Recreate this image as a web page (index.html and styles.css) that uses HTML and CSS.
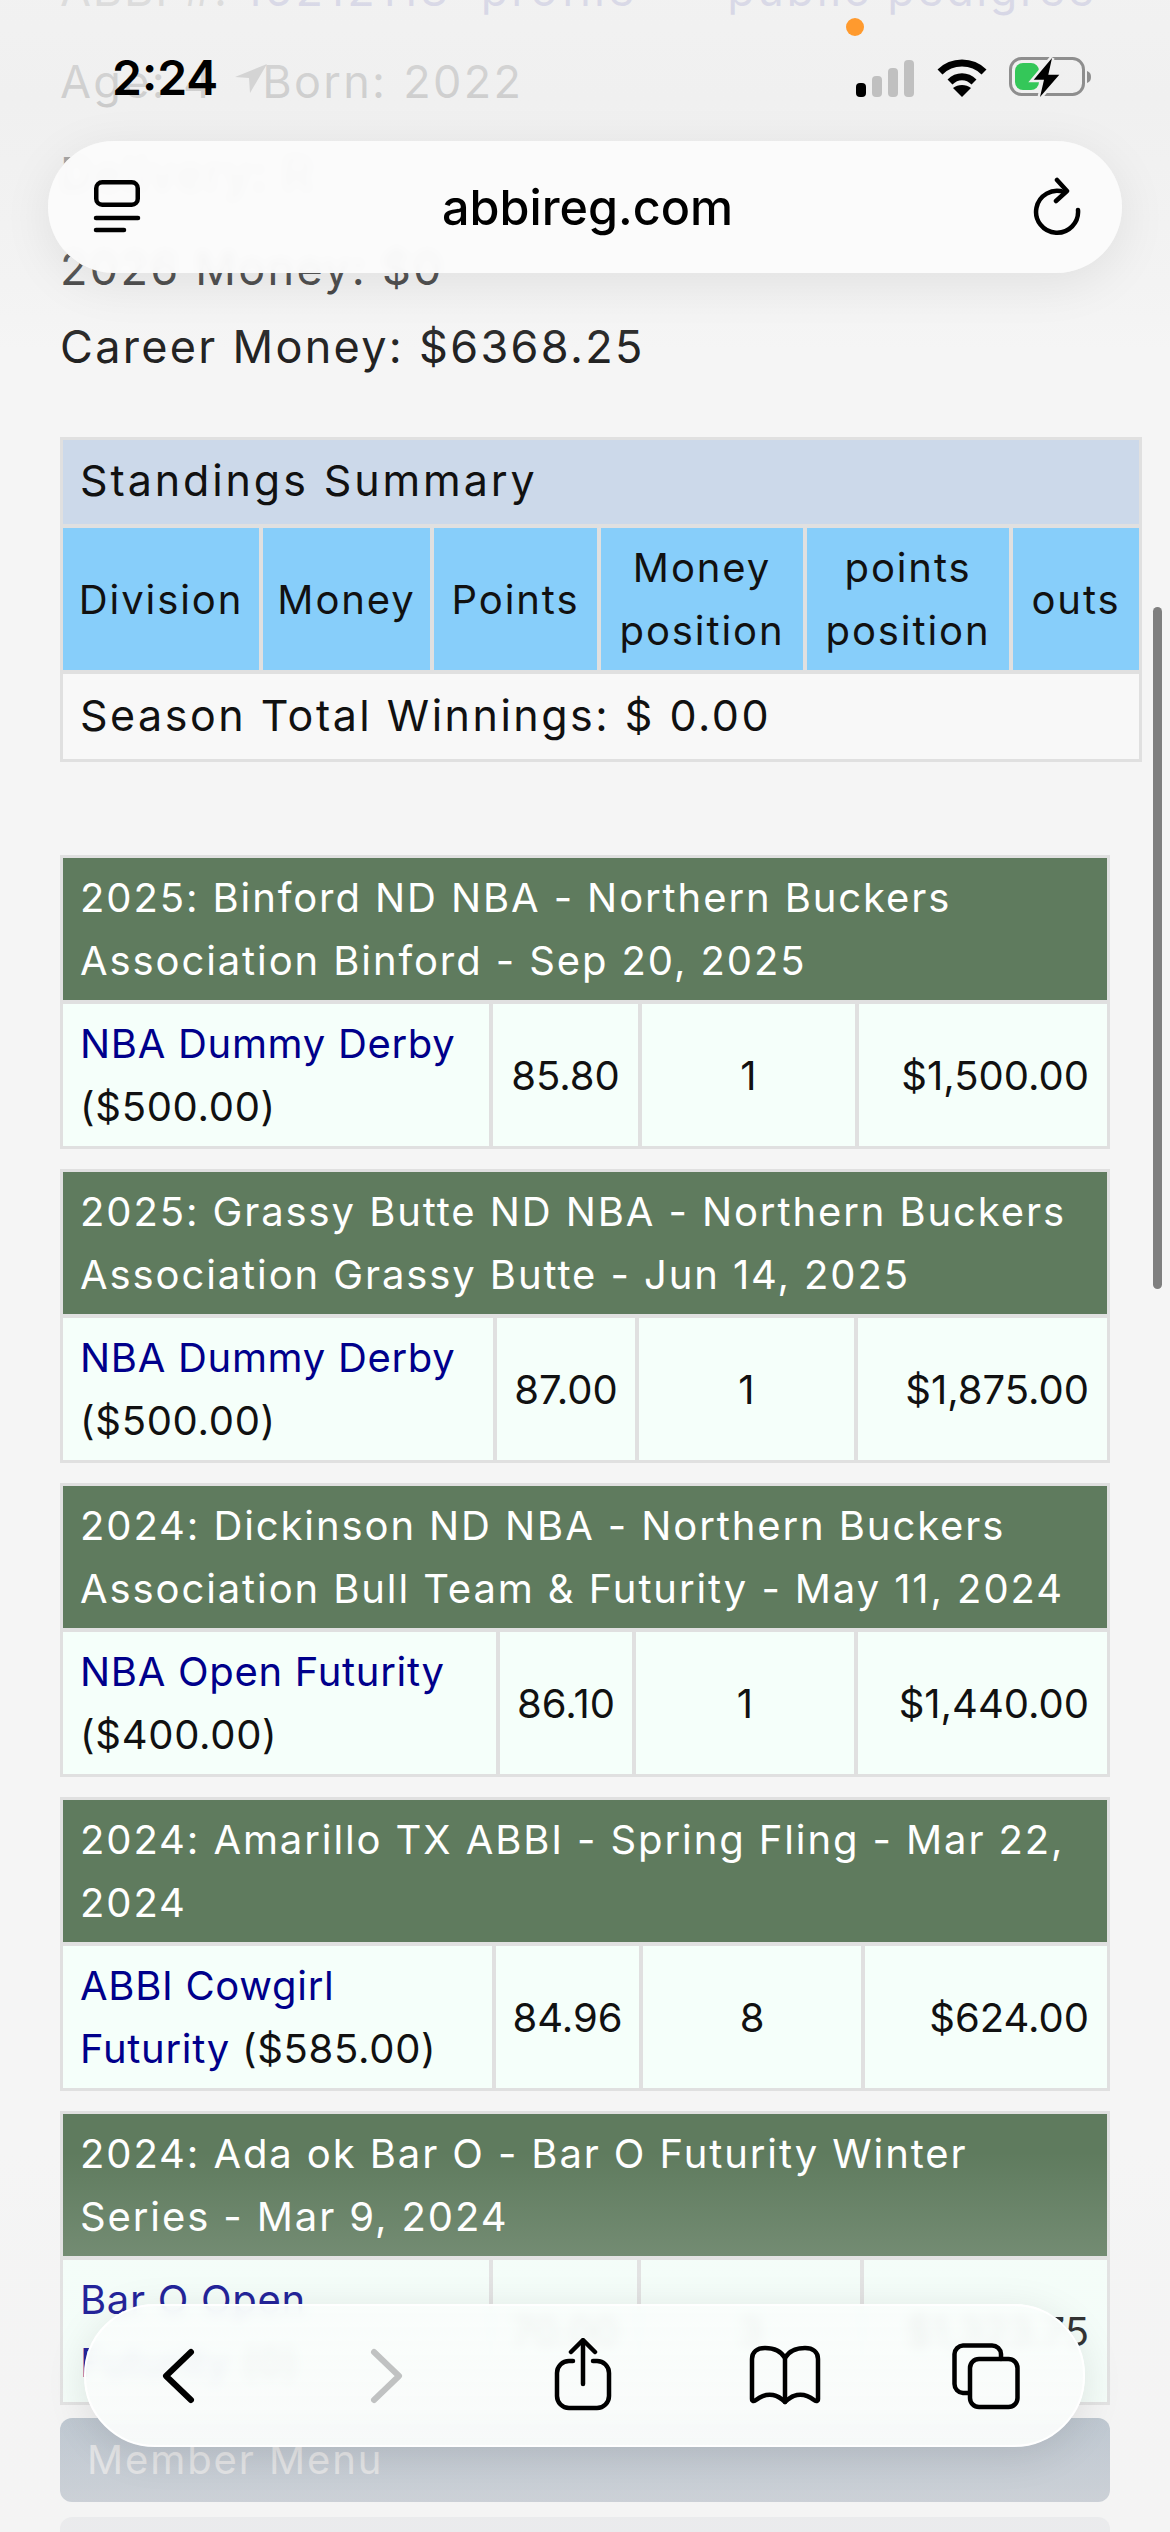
FILE: index.html
```html
<!DOCTYPE html>
<html lang="en">
<head>
    <meta charset="UTF-8">
    <meta name="viewport" content="width=device-width, initial-scale=1.0">
    <title>abbireg.com</title>
    <link rel="stylesheet" href="styles.css">
</head>
<body>
    <div class="page">
        <div class="info-block">
            <p class="info info-top">ABBI #: <a class="id-link" href="#">16212118 profile</a><span class="info-gap"></span><a href="#">public pedigree</a></p>
            <p class="info info-age">Age: 4 &nbsp; Born: 2022</p>
            <p class="info">Delivery: R</p>
        </div>
        <div class="money-block">
            <p class="info">2026 Money: $0</p>
            <p class="info">Career Money: $6368.25</p>
        </div>

        <table class="standings">
            <colgroup><col><col><col><col><col><col></colgroup>
            <tr><td class="caption" colspan="6">Standings Summary</td></tr>
            <tr class="heads">
                <th>Division</th>
                <th>Money</th>
                <th>Points</th>
                <th>Money position</th>
                <th>points position</th>
                <th>outs</th>
            </tr>
            <tr><td class="total" colspan="6">Season Total Winnings: $ 0.00</td></tr>
        </table>

        <table class="event event-a">
            <colgroup><col><col><col><col></colgroup>
            <tr><th class="event-title" colspan="4">2025: Binford ND NBA - Northern Buckers Association Binford - Sep 20, 2025</th></tr>
            <tr>
                <td><a href="#">NBA Dummy Derby</a> ($500.00)</td>
                <td class="mid">85.80</td>
                <td class="mid">1</td>
                <td class="amount">$1,500.00</td>
            </tr>
        </table>
        <table class="event event-b">
            <colgroup><col><col><col><col></colgroup>
            <tr><th class="event-title" colspan="4">2025: Grassy Butte ND NBA - Northern Buckers Association Grassy Butte - Jun 14, 2025</th></tr>
            <tr>
                <td><a href="#">NBA Dummy Derby</a> ($500.00)</td>
                <td class="mid">87.00</td>
                <td class="mid">1</td>
                <td class="amount">$1,875.00</td>
            </tr>
        </table>
        <table class="event event-c">
            <colgroup><col><col><col><col></colgroup>
            <tr><th class="event-title" colspan="4">2024: Dickinson ND NBA - Northern Buckers Association Bull Team &amp; Futurity - May 11, 2024</th></tr>
            <tr>
                <td><a href="#">NBA Open Futurity</a> ($400.00)</td>
                <td class="mid">86.10</td>
                <td class="mid">1</td>
                <td class="amount">$1,440.00</td>
            </tr>
        </table>
        <table class="event event-d">
            <colgroup><col><col><col><col></colgroup>
            <tr><th class="event-title" colspan="4">2024: Amarillo TX ABBI - Spring Fling - Mar 22, 2024</th></tr>
            <tr>
                <td><a href="#">ABBI Cowgirl<br>Futurity</a> ($585.00)</td>
                <td class="mid">84.96</td>
                <td class="mid">8</td>
                <td class="amount">$624.00</td>
            </tr>
        </table>
        <table class="event event-e">
            <colgroup><col><col><col><col></colgroup>
            <tr><th class="event-title" colspan="4">2024: Ada ok Bar O - Bar O Futurity Winter Series - Mar 9, 2024</th></tr>
            <tr>
                <td><a href="#">Bar O Open<br>Futurity</a> (0)</td>
                <td class="mid">70.00</td>
                <td class="mid">3</td>
                <td class="amount">$1,323.75</td>
            </tr>
        </table>

        <div class="menu-bar">Member Menu</div>
        <div class="menu-bar menu-bar-next"></div>
    </div>

    <div class="fade-top"></div>
    <div class="fade-bottom"></div>
    <div class="scrollbar"></div>
    <div class="camera-dot"></div>

    <div class="status">
        <span class="clock">2:24</span>
        <svg class="location" width="32" height="30" viewBox="0 0 32 30"><path d="M0 14 L32 1 L15 30 L14 15 Z" fill="#d4d4d4"/></svg>
        <span class="status-space"></span>
        <svg width="58" height="38" viewBox="0 0 58 38">
            <rect x="0" y="24" width="10" height="14" rx="4" fill="#000"/>
            <rect x="16" y="17" width="10" height="21" rx="4" fill="#c0c0c0"/>
            <rect x="32" y="9" width="10" height="29" rx="4" fill="#c0c0c0"/>
            <rect x="48" y="1" width="10" height="37" rx="4" fill="#c0c0c0"/>
        </svg>
        <svg class="wifi" width="50" height="38" viewBox="0 0 50 38">
            <path d="M3 13 C15 1 35 1 47 13" fill="none" stroke="#000" stroke-width="7"/>
            <path d="M13 23 C20 16 30 16 37 23" fill="none" stroke="#000" stroke-width="7"/>
            <path d="M25 38 L16 29 C21 25 29 25 34 29 Z" fill="#000"/>
        </svg>
        <svg class="battery" width="84" height="42" viewBox="0 0 84 42">
            <rect x="1.5" y="1.5" width="73" height="36" rx="11" fill="none" stroke="#8e8e8e" stroke-width="3"/>
            <path d="M78 14 C81 15 82 17 82 20 C82 23 81 25 78 26 Z" fill="#8e8e8e"/>
            <rect x="6" y="6" width="24" height="27" rx="8" fill="#34c759"/>
            <path d="M43 1 L24.7 22.7 L35 22.7 L31 40 L50.3 17.7 L39.3 17.7 Z" fill="#000" stroke="#f0f0f0" stroke-width="5" paint-order="stroke"/>
        </svg>
    </div>

    <div class="url-bar">
        <svg width="50" height="58" viewBox="0 0 50 58" fill="none" stroke="#000" stroke-width="4.5" stroke-linecap="round">
            <rect x="4.25" y="4.25" width="41.5" height="22.5" rx="6"/>
            <path d="M4 40 H46"/>
            <path d="M4 52 H32"/>
        </svg>
        <span class="url-text">abbireg.com</span>
        <svg width="50" height="60" viewBox="0 0 50 60" fill="none" stroke="#000" stroke-width="4.5" stroke-linecap="round" stroke-linejoin="round">
            <path d="M45 33 A21 21 0 1 1 31 15"/>
            <path d="M24 3 L34 14 L23 24"/>
        </svg>
    </div>

    <div class="tool-bar">
        <svg width="38" height="60" viewBox="0 0 38 60" fill="none" stroke="#000" stroke-width="6" stroke-linecap="round" stroke-linejoin="round"><path d="M32 6 L7 30 L32 54"/></svg>
        <svg width="38" height="60" viewBox="0 0 38 60" fill="none" stroke="#c0c2c2" stroke-width="6" stroke-linecap="round" stroke-linejoin="round"><path d="M6 6 L31 30 L6 54"/></svg>
        <svg width="64" height="76" viewBox="0 0 64 76" fill="none" stroke="#000" stroke-width="4.5" stroke-linecap="round" stroke-linejoin="round">
            <path d="M22 23 H18 A12 12 0 0 0 6 35 V58 A12 12 0 0 0 18 70 H46 A12 12 0 0 0 58 58 V35 A12 12 0 0 0 46 23 H42"/>
            <path d="M32 46 V3"/>
            <path d="M20 14 L32 2 L44 14"/>
        </svg>
        <svg width="76" height="64" viewBox="0 0 76 64" fill="none" stroke="#000" stroke-width="4.5" stroke-linecap="round" stroke-linejoin="round">
            <path d="M38 14 C34 7 26 4 18 4 C10 4 5 8 5 15 V55 C5 57 7 58 9 56 C14 52 20 50 26 51 C31 52 35 55 38 58 C41 55 45 52 50 51 C56 50 62 52 67 56 C69 58 71 57 71 55 V15 C71 8 66 4 58 4 C50 4 42 7 38 14 Z"/>
            <path d="M38 14 V58"/>
        </svg>
        <svg width="72" height="70" viewBox="0 0 72 70" fill="none" stroke="#000" stroke-width="4.5" stroke-linecap="round" stroke-linejoin="round">
            <path d="M18 52 H13 A9 9 0 0 1 4.5 43 V13 A9 9 0 0 1 13 4.5 H42 A9 9 0 0 1 51 13 V18"/>
            <rect x="20" y="18" width="47.5" height="48" rx="9"/>
        </svg>
    </div>
</body>
</html>
```

FILE: styles.css
```css
* {
    box-sizing: border-box;
}
html, body {
    height: 100%;
}
body {
    margin: 0;
    position: relative;
    overflow: hidden;
    background-color: #f5f5f5;
    color: #111;
    font-family: Inter, "Liberation Sans", sans-serif;
}
a {
    color: #00008b;
    text-decoration: none;
}

/* page content, scrolled so the first line is cut by the top edge */
.page {
    margin-top: -49px;
    padding: 0 60px;
}
.info {
    margin: 0;
    font-size: 45px;
    line-height: 78px;
    letter-spacing: 2.3px;
    color: #222;
}
.info-top {
    letter-spacing: 1.8px;
}
.info-top a {
    letter-spacing: 2.6px;
}
.info-top .id-link {
    letter-spacing: 3px;
    word-spacing: 14px;
}
.info-age {
    word-spacing: 1px;
}
.info-block {
    display: flex;
    flex-direction: column;
    gap: 14px;
    margin-bottom: 17px;
}
.money-block {
    margin-bottom: 51px;
}
.info-gap {
    display: inline-block;
    width: 90px;
}

table {
    border-collapse: separate;
    border-spacing: 0;
    table-layout: fixed;
    border: 3px solid #e0e0e0;
    font-size: 40px;
    line-height: 63px;
    letter-spacing: 1.9px;
}
th, td {
    padding: 8px 17px;
    border-top: 4px solid #e0e0e0;
    border-left: 4px solid #e0e0e0;
    font-weight: 400;
    text-align: left;
    overflow: hidden;
}
tr:first-child > * {
    border-top: 0;
}
tr > :first-child {
    border-left: 0;
}

.standings {
    width: 1082px;
    margin-bottom: 93px;
}
.standings col:nth-child(1) { width: 196px; }
.standings col:nth-child(2) { width: 171px; }
.standings col:nth-child(3) { width: 167px; }
.standings col:nth-child(4) { width: 206px; }
.standings col:nth-child(5) { width: 206px; }
.standings col:nth-child(6) { width: 130px; }
.caption {
    padding-top: 9px;
    padding-bottom: 12px;
    background-color: #ccd9ea;
    font-size: 43px;
    letter-spacing: 2.9px;
}
.heads th {
    padding-left: 2px;
    padding-right: 2px;
    background-color: #87cefa;
    text-align: center;
}
.total {
    padding-top: 10px;
    padding-bottom: 12px;
    background-color: #f8f8f8;
    font-size: 43px;
    letter-spacing: 2.5px;
}

.event {
    width: 1050px;
    margin-bottom: 20px;
}
.event td {
    background-color: #f5fffa;
    letter-spacing: 0.7px;
}
.event .event-title {
    background-color: #5f7b5e;
    color: #fff;
}
.event td.mid {
    padding-left: 2px;
    padding-right: 2px;
    text-align: center;
    letter-spacing: 0;
}
.event td.amount {
    padding-left: 2px;
    padding-right: 18px;
    text-align: right;
    letter-spacing: 0;
}

.event-a col:nth-child(1) { width: 426px; }
.event-a col:nth-child(2) { width: 149px; }
.event-a col:nth-child(3) { width: 217px; }
.event-b col:nth-child(1) { width: 430px; }
.event-b col:nth-child(2) { width: 142px; }
.event-b col:nth-child(3) { width: 219px; }
.event-c col:nth-child(1) { width: 433px; }
.event-c col:nth-child(2) { width: 136px; }
.event-c col:nth-child(3) { width: 222px; }
.event-d col:nth-child(1) { width: 429px; }
.event-d col:nth-child(2) { width: 147px; }
.event-d col:nth-child(3) { width: 222px; }
.event-e col:nth-child(1) { width: 426px; }
.event-e col:nth-child(2) { width: 148px; }
.event-e col:nth-child(3) { width: 223px; }
.event-e {
    margin-bottom: 13px;
}

.menu-bar {
    width: 1050px;
    height: 84px;
    margin-bottom: 15px;
    padding-left: 27px;
    border-radius: 12px;
    background: linear-gradient(#b4bfca, #c3c9d1);
    color: #e0e1e3;
    font-size: 40px;
    line-height: 84px;
    letter-spacing: 1.9px;
}
.menu-bar-next {
    background: #e9eaec;
}

/* browser chrome laid over the page */
.fade-top {
    position: absolute;
    top: 0;
    left: 0;
    right: 0;
    height: 350px;
    background: linear-gradient(rgba(241, 241, 241, 0.9) 0, rgba(239, 239, 239, 0.84) 100px, rgba(236, 236, 236, 0.22) 285px, rgba(245, 245, 245, 0) 350px);
}
.fade-bottom {
    position: absolute;
    left: 0;
    right: 0;
    bottom: 0;
    height: 380px;
    background: linear-gradient(rgba(240, 240, 240, 0), rgba(238, 240, 240, 0.14) 104px, rgba(240, 240, 240, 0.2));
}
.scrollbar {
    position: absolute;
    top: 607px;
    left: 1153px;
    width: 9px;
    height: 682px;
    border-radius: 5px;
    background-color: #7f7f7f;
}
.camera-dot {
    position: absolute;
    top: 18px;
    left: 846px;
    width: 18px;
    height: 18px;
    border-radius: 50%;
    background-color: #ff9a2e;
}
.status {
    position: absolute;
    top: 57px;
    left: 112px;
    right: 77px;
    height: 42px;
    display: flex;
    align-items: center;
}
.clock {
    font-size: 48px;
    font-weight: 600;
    line-height: 42px;
    color: #000;
}
.location {
    margin-left: 17px;
}
.status-space {
    flex: 1;
}
.wifi {
    margin-left: 23px;
}
.battery {
    margin-left: 22px;
}
.url-bar {
    position: absolute;
    top: 141px;
    left: 48px;
    width: 1074px;
    height: 132px;
    padding: 0 39px 0 44px;
    display: flex;
    align-items: center;
    justify-content: space-between;
    border-radius: 66px;
    background-color: rgba(251, 251, 251, 0.96);
    backdrop-filter: blur(4px);
    box-shadow: 0 10px 50px rgba(0, 0, 0, 0.08);
}
.url-text {
    font-size: 48.5px;
    font-weight: 500;
    color: #000;
}
.tool-bar {
    position: absolute;
    top: 2304px;
    left: 84px;
    width: 1001px;
    height: 143px;
    display: grid;
    grid-template-columns: 184px 234px 158px 246px 156px;
    justify-items: center;
    align-items: center;
    border: 2px solid #fff;
    border-radius: 71px;
    background: linear-gradient(rgba(249, 253, 251, 0.93), rgba(249, 251, 250, 0.97));
    backdrop-filter: blur(6px);
    box-shadow: 0 8px 40px rgba(0, 0, 0, 0.1);
}
```
